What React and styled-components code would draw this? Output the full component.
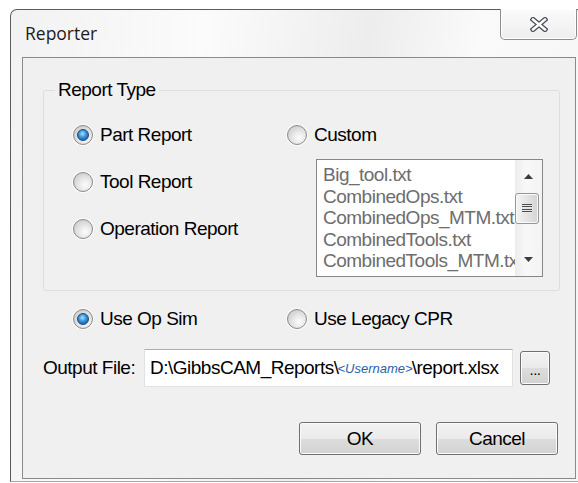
import React from 'react';
import styled, { createGlobalStyle } from 'styled-components';

const uiFont = `"Liberation Sans", Arial, sans-serif`;
const titleFont = `"Open Sans", "Noto Sans", sans-serif`;

const GlobalStyle = createGlobalStyle`
  html, body {
    margin: 0;
    padding: 0;
    background: #ffffff;
    overflow: hidden;
  }
  body {
    font-family: ${uiFont};
    font-size: 19px;
    letter-spacing: -0.5px;
    color: #000;
  }
`;

const Page = styled.div`
  width: 578px;
  height: 483px;
  padding: 9px 0 0 10px;
  box-sizing: border-box;
  overflow: hidden;
`;

const Frame = styled.div`
  width: 578px;
  height: 473px;
  box-sizing: border-box;
  display: flex;
  flex-direction: column;
  padding: 0 11px 2px 11px;
  border: 1px solid #5c5c5c;
  border-bottom-color: #a8a8a8;
  border-radius: 7px 7px 0 0;
  background: linear-gradient(
    100deg,
    #f2f2f2 0%,
    #fbfbfb 30%,
    #ededed 55%,
    #fafafa 72%,
    #f4f4f4 100%
  );
`;

const TitleBar = styled.div`
  height: 47px;
  flex-shrink: 0;
  display: flex;
  justify-content: space-between;
  align-items: flex-start;
`;

const Title = styled.div`
  font-family: ${titleFont};
  font-size: 17.5px;
  letter-spacing: 0;
  line-height: 22px;
  color: #1c1c1c;
  margin: 12px 0 0 3px;
`;

const CloseButton = styled.div`
  width: 77px;
  height: 31px;
  margin: -1px -1px 0 0;
  box-sizing: border-box;
  display: flex;
  align-items: center;
  justify-content: center;
  border: 1px solid #8d8d8d;
  border-top: none;
  border-radius: 0 0 5px 5px;
  background: linear-gradient(#fbfbfb, #eeeeee);
  box-shadow: inset 0 0 0 1px #ffffff;
`;

const Client = styled.div`
  flex: 1;
  display: flex;
  flex-direction: column;
  border: 1px solid #8a8a8a;
  background: #f0f0f0;
`;

const GroupBox = styled.div`
  position: relative;
  margin: 32px 15px 0 20px;
  height: 201px;
  box-sizing: border-box;
  padding: 32px 14px 12px 29px;
  border: 1px solid #d5dfe5;
  border-radius: 3px;
`;

const Caption = styled.span`
  position: absolute;
  top: -13px;
  left: 11px;
  padding: 0 3px;
  line-height: 24px;
  background: #f0f0f0;
`;

const TwoCol = styled.div`
  display: grid;
  grid-template-columns: 214px 1fr;
  padding-left: ${(p) => p.$indent || 0}px;
  margin-top: ${(p) => p.$top || 0}px;
`;

const Stack = styled.div`
  display: flex;
  flex-direction: column;
  gap: ${(p) => p.$gap || 0}px;
`;

const Option = styled.label`
  display: flex;
  align-items: center;
  gap: 7px;
  height: 24px;
  line-height: 24px;
  white-space: nowrap;
`;

const Radio = styled.span`
  width: 20px;
  height: 20px;
  flex-shrink: 0;
  box-sizing: border-box;
  display: inline-flex;
  align-items: center;
  justify-content: center;
  border-radius: 50%;
  border: 1px solid #8a8a8a;
  background: radial-gradient(
    circle at 62% 66%,
    #fdfdfd 0%,
    #e4e4e4 45%,
    #bfbfbf 100%
  );
  box-shadow: 0 0 0 1px rgba(255, 255, 255, 0.8);

  &::after {
    content: '';
    display: ${(p) => (p.$checked ? 'block' : 'none')};
    width: 10px;
    height: 10px;
    border-radius: 50%;
    border: 1px solid #17497f;
    background: radial-gradient(
      circle at 45% 38%,
      #a9e4ff 0%,
      #3390dc 45%,
      #0d4a8c 100%
    );
  }
`;

const ListBox = styled.div`
  display: flex;
  width: 227px;
  height: 118px;
  box-sizing: border-box;
  margin: 12px 0 0 29px;
  border: 1px solid #828790;
  background: #ffffff;
`;

const Items = styled.div`
  flex: 1;
  min-width: 0;
  overflow: hidden;
  padding: 4px 0 0 6px;
`;

const Item = styled.div`
  line-height: 21.6px;
  color: #6d6d6d;
  white-space: nowrap;
`;

const ScrollBar = styled.div`
  width: 27px;
  flex-shrink: 0;
  display: flex;
  flex-direction: column;
  background: linear-gradient(to right, #ececec, #f8f8f8 40%, #f3f3f3);
`;

const Arrow = styled.div`
  height: ${(p) => p.$h}px;
  display: flex;
  align-items: center;
  justify-content: center;
`;

const Thumb = styled.div`
  height: 31px;
  margin: 1px 3px 0 0;
  box-sizing: border-box;
  display: flex;
  align-items: center;
  justify-content: center;
  border: 1px solid #969696;
  border-radius: 3px;
  background: linear-gradient(to right, #f4f4f4, #e2e2e2 55%, #d4d4d4);
  box-shadow: inset 0 0 0 1px #fafafa;
`;

const Grip = styled.span`
  width: 10px;
  height: 9px;
  background: repeating-linear-gradient(
    to bottom,
    #4c4c4c 0 1px,
    #e8e8e8 1px 2px,
    transparent 2px 2.5px
  );
`;

const Spacer = styled.div`
  flex: 1;
`;

const OutputRow = styled.div`
  display: flex;
  align-items: center;
  margin: 18px 0 0 20px;
`;

const FieldLabel = styled.span`
  width: 101px;
  flex-shrink: 0;
  white-space: nowrap;
`;

const PathBox = styled.div`
  width: 369px;
  height: 38px;
  box-sizing: border-box;
  display: flex;
  align-items: center;
  padding-left: 5px;
  white-space: nowrap;
  overflow: hidden;
  background: #ffffff;
  border: 1px solid #dfe2e8;
  border-top-color: #acaeb4;
`;

const Token = styled.span`
  font-style: italic;
  font-size: 13px;
  letter-spacing: 0;
  color: #2c5ea8;
  margin: 0 -1px;
`;

const PushButton = styled.button`
  width: ${(p) => p.$w}px;
  height: ${(p) => p.$h}px;
  padding: 0;
  margin: 0;
  font-family: ${uiFont};
  font-size: 19px;
  letter-spacing: -0.5px;
  line-height: 1;
  color: #000;
  border: 1px solid #707070;
  border-radius: 3px;
  background: linear-gradient(
    #f2f2f2 0%,
    #ebebeb 50%,
    #dddddd 51%,
    #d2d2d2 100%
  );
  box-shadow: inset 0 0 0 1px #fbfbfb;
`;

const BrowseButton = styled(PushButton)`
  margin-left: 7px;
  display: flex;
  align-items: flex-end;
  justify-content: center;
  padding-bottom: 7px;
  font-size: 15px;
`;

const ButtonRow = styled.div`
  display: flex;
  justify-content: flex-end;
  gap: 15px;
  margin: 35px 17px 0 0;
`;

const listFiles = [
  'Big_tool.txt',
  'CombinedOps.txt',
  'CombinedOps_MTM.txt',
  'CombinedTools.txt',
  'CombinedTools_MTM.txt',
];

const CloseGlyph = () => (
  <svg width="18" height="15" viewBox="0 0 18 15">
    <g strokeLinecap="square">
      <path d="M3 2.5 L15 12.5 M15 2.5 L3 12.5" stroke="#4a4f58" strokeWidth="5" />
      <path d="M3 2.5 L15 12.5 M15 2.5 L3 12.5" stroke="#ffffff" strokeWidth="2.4" />
    </g>
  </svg>
);

const UpArrow = () => (
  <svg width="9" height="5" viewBox="0 0 9 5">
    <path d="M0 5 L4.5 0 L9 5 Z" fill="#3c3c3c" />
  </svg>
);

const DownArrow = () => (
  <svg width="9" height="5" viewBox="0 0 9 5">
    <path d="M0 0 L9 0 L4.5 5 Z" fill="#3c3c3c" />
  </svg>
);

const RadioOption = ({ label, checked }) => (
  <Option>
    <Radio $checked={checked} />
    {label}
  </Option>
);

export default function App() {
  return (
    <Page>
      <GlobalStyle />
      <Frame>
        <TitleBar>
          <Title>Reporter</Title>
          <CloseButton>
            <CloseGlyph />
          </CloseButton>
        </TitleBar>
        <Client>
          <GroupBox>
            <Caption>Report Type</Caption>
            <TwoCol>
              <Stack $gap={23}>
                <RadioOption label="Part Report" checked />
                <RadioOption label="Tool Report" />
                <RadioOption label="Operation Report" />
              </Stack>
              <Stack>
                <RadioOption label="Custom" />
                <ListBox>
                  <Items>
                    {listFiles.map((f) => (
                      <Item key={f}>{f}</Item>
                    ))}
                  </Items>
                  <ScrollBar>
                    <Arrow $h={32}>
                      <UpArrow />
                    </Arrow>
                    <Thumb>
                      <Grip />
                    </Thumb>
                    <Spacer />
                    <Arrow $h={34}>
                      <DownArrow />
                    </Arrow>
                  </ScrollBar>
                </ListBox>
              </Stack>
            </TwoCol>
          </GroupBox>

          <TwoCol $indent={50} $top={16}>
            <RadioOption label="Use Op Sim" checked />
            <RadioOption label="Use Legacy CPR" />
          </TwoCol>

          <OutputRow>
            <FieldLabel>Output File:</FieldLabel>
            <PathBox>
              D:\GibbsCAM_Reports\<Token>&lt;Username&gt;</Token>\report.xlsx
            </PathBox>
            <BrowseButton $w={30} $h={34}>...</BrowseButton>
          </OutputRow>

          <ButtonRow>
            <PushButton $w={122} $h={33}>OK</PushButton>
            <PushButton $w={122} $h={33}>Cancel</PushButton>
          </ButtonRow>
        </Client>
      </Frame>
    </Page>
  );
}
